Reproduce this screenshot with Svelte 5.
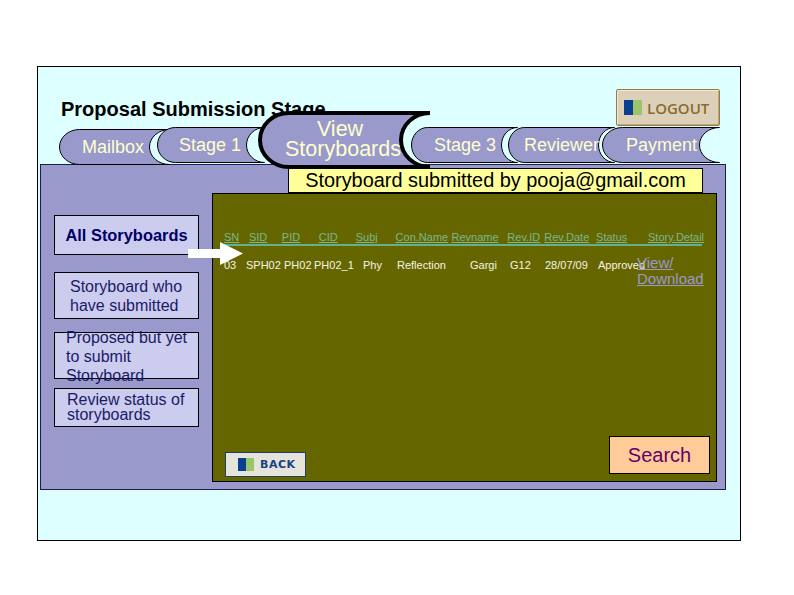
<script>
  // tabs sit on a free slide canvas, so x/y are the content here
  const tabs = [
    { label: 'Mailbox', x: 59, y: 129, w: 111, h: 36, rx: 20, tx: 23 },
    { label: 'Stage 1', x: 157, y: 127, w: 108, h: 36, rx: 18, tx: 22 },
    { label: 'Stage 3', x: 411, y: 127, w: 107, h: 36, rx: 16, tx: 23 },
    { label: 'Reviewer', x: 508, y: 127, w: 107, h: 36, rx: 16, tx: 16 },
    { label: 'Payment', x: 602, y: 127, w: 118, h: 36, rx: 20, tx: 24 }
  ];

  const tabPath = (w, h, rx, s) =>
    `M${rx + s} ${s} L${w - s} ${s} A${rx} ${h / 2 - s} 0 0 0 ${w - s} ${h - s} L${rx + s} ${h - s} A${rx} ${h / 2 - s} 0 0 1 ${rx + s} ${s} Z`;

  const menu = [
    { text: 'All Storyboards', cls: 'all' },
    { text: 'Storyboard who have submitted', cls: 'who' },
    { text: 'Proposed but yet to submit Storyboard', cls: 'proposed' },
    { text: 'Review status of storyboards', cls: 'review' }
  ];

  const headCols = [
    ['SN', 25], ['SID', 33], ['PID', 37], ['CID', 37], ['Subj', 40], ['Con.Name', 56],
    ['Revname', 56], ['Rev.ID', 37], ['Rev.Date', 52], ['Status', 52], ['Story.Detail', 54]
  ];
  const rowCols = [
    ['03', 22], ['SPH02', 38], ['PH02', 30], ['PH02_1', 49], ['Phy', 34], ['Reflection', 73],
    ['Gargi', 40], ['G12', 35], ['28/07/09', 53], ['Approved', 39]
  ];
</script>

<div class="slide">
  <h1 class="title">Proposal Submission Stage</h1>

  <div class="panel">
    <nav class="menu">
      {#each menu as item}
        <a class={item.cls}><span>{item.text}</span></a>
      {/each}
    </nav>

    <section class="board">
      <div class="heading">Storyboard submitted by pooja@gmail.com</div>
      <div class="thead">
        {#each headCols as [name, width]}
          <span style="width: {width}px">{name}</span>
        {/each}
      </div>
      <div class="trow">
        {#each rowCols as [value, width]}
          <span style="width: {width}px">{value}</span>
        {/each}
        <a class="detail">View/<br />Download</a>
      </div>

      <div class="actions">
        <button class="back">
          <svg width="16" height="13" viewBox="0 0 16 13"><rect width="8" height="13" fill="#0b3f92" /><rect x="8" width="8" height="13" fill="#9cc469" /></svg>
          <span>BACK</span>
        </button>
        <button class="search">Search</button>
      </div>
    </section>
  </div>

  <svg class="arrow" width="56" height="24" viewBox="0 0 56 24"><path d="M0 7H32V0L55 11.500L32 23V16H0Z" fill="#fff" /></svg>

  <button class="logout">
    <svg width="18" height="15" viewBox="0 0 18 15"><rect width="9" height="15" fill="#0b3f92" /><rect x="9" width="9" height="15" fill="#9cc469" /></svg>
    <span>LOGOUT</span>
  </button>

  {#each tabs as t}
    <div class="tab" style="left: {t.x - 38}px; top: {t.y - 67}px; width: {t.w}px; height: {t.h}px">
      <svg width={t.w} height={t.h}><path d={tabPath(t.w, t.h, t.rx, 0.5)} fill="#9999cc" stroke="#000" /></svg>
      <span style="left: {t.tx}px">{t.label}</span>
    </div>
  {/each}

  <div class="tab current">
    <svg width="174" height="58"><path d={tabPath(174, 58, 29, 2)} fill="#9999cc" stroke="#000" stroke-width="4" /></svg>
    <span>View&nbsp;<br />Storyboards</span>
  </div>
</div>

<style>
  :global(body) {
    margin: 0;
    background: #fff;
  }

  .slide {
    position: relative;
    box-sizing: border-box;
    width: 704px;
    height: 475px;
    margin: 66px 0 0 37px;
    padding-top: 30px;
    border: 1px solid #000;
    background: #ddffff;
    font-family: "Liberation Sans", Arial, sans-serif;
    overflow: hidden;
  }

  .title {
    margin: 0 0 0 23px;
    height: 24px;
    font-size: 20px;
    line-height: 24px;
    font-weight: 700;
    color: #000;
    white-space: nowrap;
  }

  .panel {
    display: flex;
    box-sizing: border-box;
    width: 686px;
    height: 326px;
    margin: 43px 0 0 2px;
    border: 1px solid #1c1c50;
    background: #9999cc;
  }

  .menu {
    display: flex;
    flex-direction: column;
    width: 145px;
    margin: 50px 0 0 13px;
  }

  .menu a {
    box-sizing: border-box;
    display: block;
    border: 1px solid #000;
    background: #ccccee;
    color: #1a1a66;
    font-size: 16px;
  }

  .all {
    height: 40px;
    font-weight: 700;
    color: #000066 !important;
    font-size: 16.400px !important;
    text-align: center;
    line-height: 39px;
  }

  .who {
    height: 47px;
    margin-top: 17px;
    padding-left: 15px;
    line-height: 19px;
    padding-top: 4px;
  }

  .proposed {
    height: 47px;
    margin-top: 13px;
    padding-left: 11px;
    line-height: 19px;
  }

  .proposed span {
    display: block;
    margin-top: -5px;
  }

  .review {
    height: 39px;
    margin-top: 9px;
    padding-left: 12px;
    line-height: 15px;
    padding-top: 3px;
  }

  .board {
    position: relative;
    box-sizing: border-box;
    width: 505px;
    height: 289px;
    margin: 28px 0 0 13px;
    padding: 36px 14px 0 11px;
    border: 1px solid #000;
    background: #666600;
  }

  .heading {
    position: absolute;
    left: 75px;
    top: -26px;
    box-sizing: border-box;
    width: 415px;
    height: 25px;
    border: 1px solid #000;
    background: #ffff99;
    color: #000;
    font-size: 19.900px;
    line-height: 23px;
    text-align: center;
    white-space: nowrap;
  }

  .thead,
  .trow {
    display: flex;
    font-size: 11px;
    white-space: nowrap;
  }

  .thead {
    height: 14px;
    line-height: 15px;
    color: #76b894;
    border-bottom: 2px solid #66b08c;
  }

  .thead span {
    text-decoration: underline;
  }

  .trow {
    position: relative;
    margin-top: 12px;
    line-height: 14px;
    color: #f4f4e4;
  }

  .detail {
    position: absolute;
    left: 413px;
    top: -3px;
    font-size: 15px;
    line-height: 16px;
    color: #9999cc;
    text-decoration: underline;
  }

  .actions {
    position: absolute;
    left: 12px;
    right: 6px;
    bottom: 4px;
    display: flex;
    justify-content: space-between;
    align-items: flex-end;
  }

  .back {
    display: flex;
    align-items: center;
    gap: 6px;
    box-sizing: border-box;
    width: 81px;
    height: 25px;
    padding: 0 0 0 12px;
    border: 1px solid #24405a;
    background: #e4e4dc;
    color: #1c4080;
    font-family: "DejaVu Sans", sans-serif;
    font-size: 11px;
    font-weight: 700;
    letter-spacing: 0.5px;
  }

  .search {
    box-sizing: border-box;
    width: 101px;
    height: 38px;
    margin-bottom: 3px;
    padding: 0;
    border: 1px solid #000;
    border-radius: 0;
    background: #ffcc99;
    color: #660066;
    font-family: inherit;
    font-size: 20px;
  }

  .arrow {
    position: absolute;
    left: 150px;
    top: 175px;
  }

  .logout {
    position: absolute;
    left: 578px;
    top: 22px;
    display: flex;
    align-items: center;
    gap: 5px;
    box-sizing: border-box;
    width: 104px;
    height: 37px;
    padding: 0 0 0 7px;
    border: 1px solid #9c7c3c;
    border-radius: 2px;
    background: #dcd0b8;
    box-shadow: inset 1px 1px 0 #f0e8d8, inset -1px -1px 0 #b8a888;
    color: #8a6a30;
    font-family: "Open Sans", sans-serif;
    font-size: 15px;
    font-weight: 600;
  }

  .tab {
    position: absolute;
  }

  .tab svg {
    display: block;
  }

  .tab span {
    position: absolute;
    top: 8px;
    color: #ffffcc;
    font-size: 18px;
    line-height: 20px;
    white-space: nowrap;
  }

  .current {
    left: 220px;
    top: 44px;
  }

  .current span {
    left: 0;
    width: 170px;
    top: 8px;
    font-size: 21.500px;
    text-align: center;
  }
</style>
